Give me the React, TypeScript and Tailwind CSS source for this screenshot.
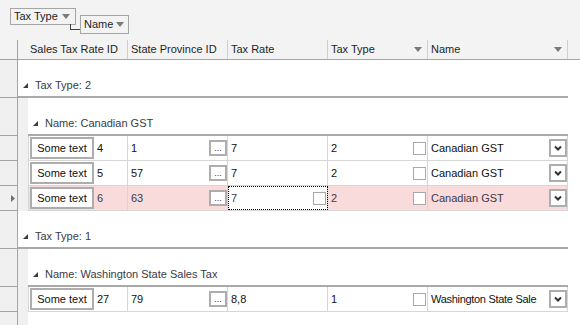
import React from "react";

type Row = { id: string; prov: string; rate: string; type: string; name: string; selected?: boolean; tight?: boolean };

const canadian: Row[] = [
  { id: "4", prov: "1", rate: "7", type: "2", name: "Canadian GST" },
  { id: "5", prov: "57", rate: "7", type: "2", name: "Canadian GST" },
  { id: "6", prov: "63", rate: "7", type: "2", name: "Canadian GST", selected: true },
];

const washington: Row[] = [
  { id: "27", prov: "79", rate: "8,8", type: "1", name: "Washington State Sale", tight: true },
];

function DownArrow({ className = "" }: { className?: string }) {
  return (
    <svg width="8" height="5" viewBox="0 0 8 5" className={className}>
      <polygon points="0,0 8,0 4,5" fill="#7a7a7a" />
    </svg>
  );
}

function GroupGlyph() {
  return (
    <svg width="5" height="5" viewBox="0 0 5 5" className="shrink-0">
      <polygon points="5,0 5,5 0,5" fill="#3c3c3c" />
    </svg>
  );
}

function Gutter({ h, current = false }: { h: string; current?: boolean }) {
  return (
    <div className={`${h} w-[18px] shrink-0 border-r border-b border-[#a3a3a3] bg-[#f0f0f0] flex items-center justify-end pr-[2px]`}>
      {current && (
        <svg width="4" height="7" viewBox="0 0 4 7">
          <polygon points="0,0 4,3.5 0,7" fill="#707070" />
        </svg>
      )}
    </div>
  );
}

function GroupRow({ label, level }: { label: string; level: 1 | 2 }) {
  return (
    <div className="flex">
      <Gutter h="h-[38px]" />
      {level === 2 && <div className="w-[10px] shrink-0 bg-[#f0f0f0]" />}
      <div
        className={`${level === 2 ? "w-[540px]" : "w-[550px]"} h-[38px] border-b-2 border-[#a9a9a9] bg-white flex items-center gap-[7px] pl-[5px] pt-[15px] text-[#3a3a46]`}
      >
        <GroupGlyph />
        <span>{label}</span>
      </div>
      <div className="flex-1 bg-white" />
    </div>
  );
}

function DataRow({ row }: { row: Row }) {
  const bg = row.selected ? "bg-[#f9dbdb]" : "bg-white";
  const text = row.selected ? "text-[#3a3a4a]" : "text-[#111]";
  return (
    <div className="flex">
      <Gutter h="h-[25px]" current={row.selected} />
      <div className="w-[10px] shrink-0 bg-[#f0f0f0]" />
      <div className={`flex w-[540px] h-[25px] border-l border-b border-[#d6d6d6] ${bg} ${text}`}>
        <div className="w-[99px] flex items-center border-r border-[#d6d6d6] pl-[1px]">
          <button className="w-[64px] h-[22px] border-2 border-[#adadad] bg-white text-[#111] flex items-center justify-center">
            Some text
          </button>
          <span className="ml-[3px]">{row.id}</span>
        </div>
        <div className="w-[100px] flex items-center justify-between border-r border-[#d6d6d6] pl-[3px]">
          <span>{row.prov}</span>
          <div className="w-[18px] h-[16px] border-2 border-[#adadad] bg-white flex items-end justify-center pb-[1px] text-[9px] leading-none text-[#3a1a5a]">
            ...
          </div>
        </div>
        {row.selected ? (
          <div className="w-[100px] flex items-center justify-between bg-white border-r border-[#d6d6d6] pl-[3px] pr-[1px] outline-1 outline-dotted outline-black -outline-offset-1">
            <span>{row.rate}</span>
            <div className="w-[13px] h-[13px] border border-[#a8a8a8] bg-white" />
          </div>
        ) : (
          <div className="w-[100px] flex items-center border-r border-[#d6d6d6] pl-[3px]">
            <span>{row.rate}</span>
          </div>
        )}
        <div className="w-[100px] flex items-center justify-between border-r border-[#d6d6d6] pl-[3px] pr-[1px]">
          <span>{row.type}</span>
          <div className="w-[13px] h-[13px] border border-[#a8a8a8] bg-white" />
        </div>
        <div className="w-[140px] flex items-center border-r border-[#d6d6d6] pl-[3px]">
          <span className={`flex-1 whitespace-nowrap ${row.tight ? "tracking-[-0.3px]" : ""}`}>{row.name}</span>
          <div className="w-[18px] h-[18px] shrink-0 ml-[2px] border-2 border-[#adadad] bg-white flex items-center justify-center">
            <svg width="8" height="6" viewBox="0 0 8 6">
              <path d="M1 1.5 L4 4.5 L7 1.5" stroke="#333" strokeWidth="2" fill="none" />
            </svg>
          </div>
        </div>
      </div>
      <div className="flex-1 bg-white" />
    </div>
  );
}

export default function App() {
  return (
    <div className="w-[580px] h-[325px] overflow-hidden flex flex-col bg-white font-['Liberation_Sans',Arial,sans-serif] text-[11px] leading-[13px]">
      {/* group panel */}
      <div className="h-[40px] shrink-0 bg-[#f3f3f3] flex items-start pl-[10px] pt-[8px] text-[#1e1e1e]">
        <div className="w-[66px] h-[17px] border border-[#a6a6a6] flex items-center justify-between pl-[3px] pr-[5px]">
          <span>Tax Type</span>
          <DownArrow />
        </div>
        <div className="-ml-[6px] mt-[16px] w-[10px] h-[6px] border-l border-b border-[#404040]" />
        <div className="mt-[7px] w-[49px] h-[19px] border border-[#a6a6a6] flex items-center justify-between pl-[3px] pr-[4px]">
          <span>Name</span>
          <DownArrow />
        </div>
      </div>

      {/* column header */}
      <div className="h-[20px] shrink-0 flex bg-[#f3f3f3] border-b border-[#a3a3a3] text-[#1e1e1e]">
        <div className="w-[18px] border-r border-[#a3a3a3]" />
        <div className="w-[110px] flex items-center border-r border-[#cfcfcf] pl-[12px]">Sales Tax Rate ID</div>
        <div className="w-[100px] flex items-center border-r border-[#cfcfcf] pl-[3px]">State Province ID</div>
        <div className="w-[100px] flex items-center border-r border-[#cfcfcf] pl-[3px]">Tax Rate</div>
        <div className="w-[100px] flex items-center justify-between border-r border-[#cfcfcf] pl-[3px] pr-[5px]">
          <span>Tax Type</span>
          <DownArrow />
        </div>
        <div className="w-[140px] flex items-center justify-between border-r border-[#cfcfcf] pl-[3px] pr-[5px]">
          <span>Name</span>
          <DownArrow />
        </div>
      </div>

      <GroupRow label="Tax Type: 2" level={1} />
      <GroupRow label="Name: Canadian GST" level={2} />
      {canadian.map((r) => (
        <DataRow key={r.id} row={r} />
      ))}
      <GroupRow label="Tax Type: 1" level={1} />
      <GroupRow label="Name: Washington State Sales Tax" level={2} />
      {washington.map((r) => (
        <DataRow key={r.id} row={r} />
      ))}

      <div className="flex flex-1">
        <div className="w-[18px] border-r border-[#a3a3a3] bg-[#f0f0f0]" />
        <div className="w-[10px] bg-[#f0f0f0]" />
        <div className="flex-1 bg-white" />
      </div>
    </div>
  );
}
